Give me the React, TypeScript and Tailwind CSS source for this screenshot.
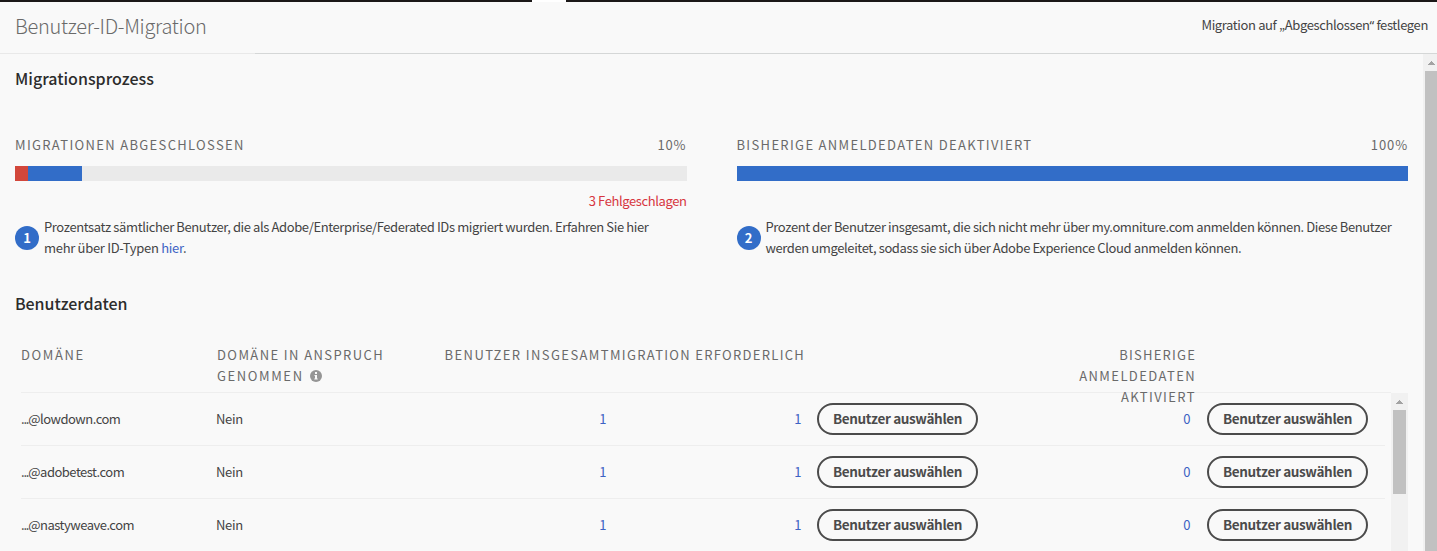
import type { ReactNode } from "react";

const domains = ["lowdown.com", "adobetest.com", "nastyweave.com"];

function ProgressPanel({
  title,
  percent,
  bars,
  failed,
  step,
  children,
}: {
  title: ReactNode;
  percent: string;
  bars: ReactNode;
  failed?: string;
  step: number;
  children: ReactNode;
}) {
  return (
    <section className="min-w-0 flex-1">
      <div className="flex h-[21px] items-center justify-between text-[13px] leading-[21px] text-[#6a6a6a]">
        <h3 className="tracking-[1.33px]">{title}</h3>
        <span className="tracking-[0.9px]">{percent}</span>
      </div>
      <div className="mt-[11px] flex h-[15px] bg-[#eaeaea]">{bars}</div>
      <div className="mt-[9px] h-[21px] text-right text-[13px] leading-[21px] tracking-[-0.4px] text-[#d7373f]">
        {failed}
      </div>
      <div className="mt-[5px] flex">
        <span className="mt-[10px] flex size-6 shrink-0 items-center justify-center rounded-full bg-[#326dc8] text-[13px] font-bold leading-6 text-white">
          {step}
        </span>
        <p className="ml-[5px] whitespace-nowrap text-[13px] leading-[21px] tracking-[-0.39px] text-[#444444]">
          {children}
        </p>
      </div>
    </section>
  );
}

function SelectButton() {
  return (
    <button className="flex h-8 w-[161px] shrink-0 items-center justify-center whitespace-nowrap rounded-full border-2 border-[#4b4b4b] pb-[2px] text-[13.5px] font-bold leading-5 tracking-[-0.36px] text-[#4b4b4b]">
      Benutzer auswählen
    </button>
  );
}

function ArrowUp() {
  return (
    <svg width="17" height="17" viewBox="0 0 17 17" className="block shrink-0" shapeRendering="crispEdges">
      <path d="M5 11 L8.5 7 L12 11 Z" fill="#a3a3a3" />
    </svg>
  );
}

function DomainRow({ name }: { name: string }) {
  return (
    <div className="flex h-[53px] w-[1364px] items-center border-b border-[#eeeeee] text-[13px] leading-[21px] tracking-[-0.35px] text-[#444444]">
      <span className="mb-[2px] w-[195px] tracking-[-0.5px]">
        <span className="tracking-[-1.2px]">...</span>@{name}
      </span>
      <span className="mb-[2px] w-[195px]">Nein</span>
      <span className="mb-[2px] w-[196px] pr-px text-right text-[#3d63c4]">1</span>
      <span className="mb-[2px] w-[195px] pr-px text-right text-[#3d63c4]">1</span>
      <span className="w-[195px] pl-[15px]">
        <SelectButton />
      </span>
      <span className="mb-[2px] w-[194px] pr-px text-right text-[#3d63c4]">0</span>
      <span className="pl-4">
        <SelectButton />
      </span>
    </div>
  );
}

export default function App() {
  return (
    <div className="flex h-[551px] w-[1437px] flex-col overflow-hidden bg-[#f9f9f9] font-['Noto_Sans_CJK_SC','Noto_Sans',sans-serif]">
      <div className="flex h-[2px] shrink-0 bg-[#1b1818]">
        <div className="ml-[532px] w-[34px] bg-white" />
      </div>
      <header className="flex h-[51px] shrink-0 items-center justify-between pl-[15px] pr-[9px]">
        <h1 className="mb-[3px] text-[20px] font-light leading-[26px] tracking-[-0.3px] text-[#6a6a6a]">
          Benutzer-ID-Migration
        </h1>
        <button className="mb-[5px] text-[13px] leading-[21px] tracking-[-0.38px] text-[#444444]">
          Migration auf „Abgeschlossen<span className="font-['Noto_Sans',sans-serif]">“</span> festlegen
        </button>
      </header>
      <div className="flex h-px shrink-0">
        <div className="w-[255px] bg-[#e9e9e9]" />
        <div className="flex-1 bg-[#d5d7d7]" />
      </div>
      <div className="flex min-h-0 flex-1">
        <main className="w-[1423px] shrink-0 pl-[15px] pt-[14px]">
          <h2 className="h-[21px] text-[16px] font-medium leading-[21px] text-[#2c2c2c]">Migrationsprozess</h2>
          <div className="mr-[15px] mt-[45px] flex gap-[50px]">
            <ProgressPanel
              title="MIGRATIONEN ABGESCHLOSSEN"
              percent="10%"
              failed="3 Fehlgeschlagen"
              step={1}
              bars={
                <>
                  <div className="w-[13px] bg-[#d2473b]" />
                  <div className="w-[54px] bg-[#326dc8]" />
                </>
              }
            >
              Prozentsatz sämtlicher Benutzer, die als Adobe/Enterprise/Federated IDs migriert wurden. Erfahren Sie hier
              <br />
              <span className="tracking-[-0.3px]">
                mehr über ID-Typen <a className="text-[#3d63c4]">hier</a>.
              </span>
            </ProgressPanel>
            <ProgressPanel
              title="BISHERIGE ANMELDEDATEN DEAKTIVIERT"
              percent="100%"
              step={2}
              bars={<div className="w-full bg-[#326dc8]" />}
            >
              Prozent der Benutzer insgesamt, die sich nicht mehr über my.omniture.com anmelden können. Diese Benutzer
              <br />
              werden umgeleitet, sodass sie sich über Adobe Experience Cloud anmelden können.
            </ProgressPanel>
          </div>
          <h2 className="mt-[35px] h-[21px] text-[16px] font-medium leading-[21px] tracking-[-0.06px] text-[#2c2c2c]">
            Benutzerdaten
          </h2>
          <div className="ml-[6px] mt-[30px] flex h-[49px] w-[1370px] items-start whitespace-nowrap border-b border-[#eeeeee] text-[13px] leading-[21px] tracking-[1.4px] text-[#6a6a6a]">
            <div className="w-[196px] tracking-[1.6px]">DOMÄNE</div>
            <div className="w-[196px]">
              DOMÄNE IN ANSPRUCH
              <div className="flex items-center tracking-[1.6px]">
                GENOMMEN
                <svg width="12" height="12" viewBox="0 0 12 12" className="ml-[6px]">
                  <circle cx="6" cy="6" r="6" fill="#959595" />
                  <path d="M5 2h2v2H5zM4.5 5H7v3.5h.7v1H4.3v-1H5V6h-.5z" fill="#f9f9f9" />
                </svg>
              </div>
            </div>
            <div className="w-[197px] text-right">BENUTZER INSGESAMT</div>
            <div className="w-[194px] text-right tracking-[1.3px]">MIGRATION ERFORDERLICH</div>
            <div className="w-[196px]" />
            <div className="w-[196px] text-right">
              <span className="tracking-[1.2px]">BISHERIGE</span>
              <br />
              ANMELDEDATEN
              <br />
              AKTIVIERT
            </div>
          </div>
          <div className="ml-[6px] flex h-[158px] overflow-hidden">
            <div className="w-[1370px] shrink-0">
              {domains.map((name) => (
                <DomainRow key={name} name={name} />
              ))}
            </div>
            <div className="flex w-[17px] shrink-0 flex-col items-center bg-[#f1f1f1]">
              <ArrowUp />
              <div className="h-[84px] w-[13px] bg-[#c1c1c1]" />
            </div>
          </div>
        </main>
        <div className="flex w-[14px] shrink-0 flex-col overflow-hidden bg-[#f1f1f1]">
          <ArrowUp />
          <div className="ml-[2px] flex-1 bg-[#c1c1c1]" />
        </div>
      </div>
    </div>
  );
}
